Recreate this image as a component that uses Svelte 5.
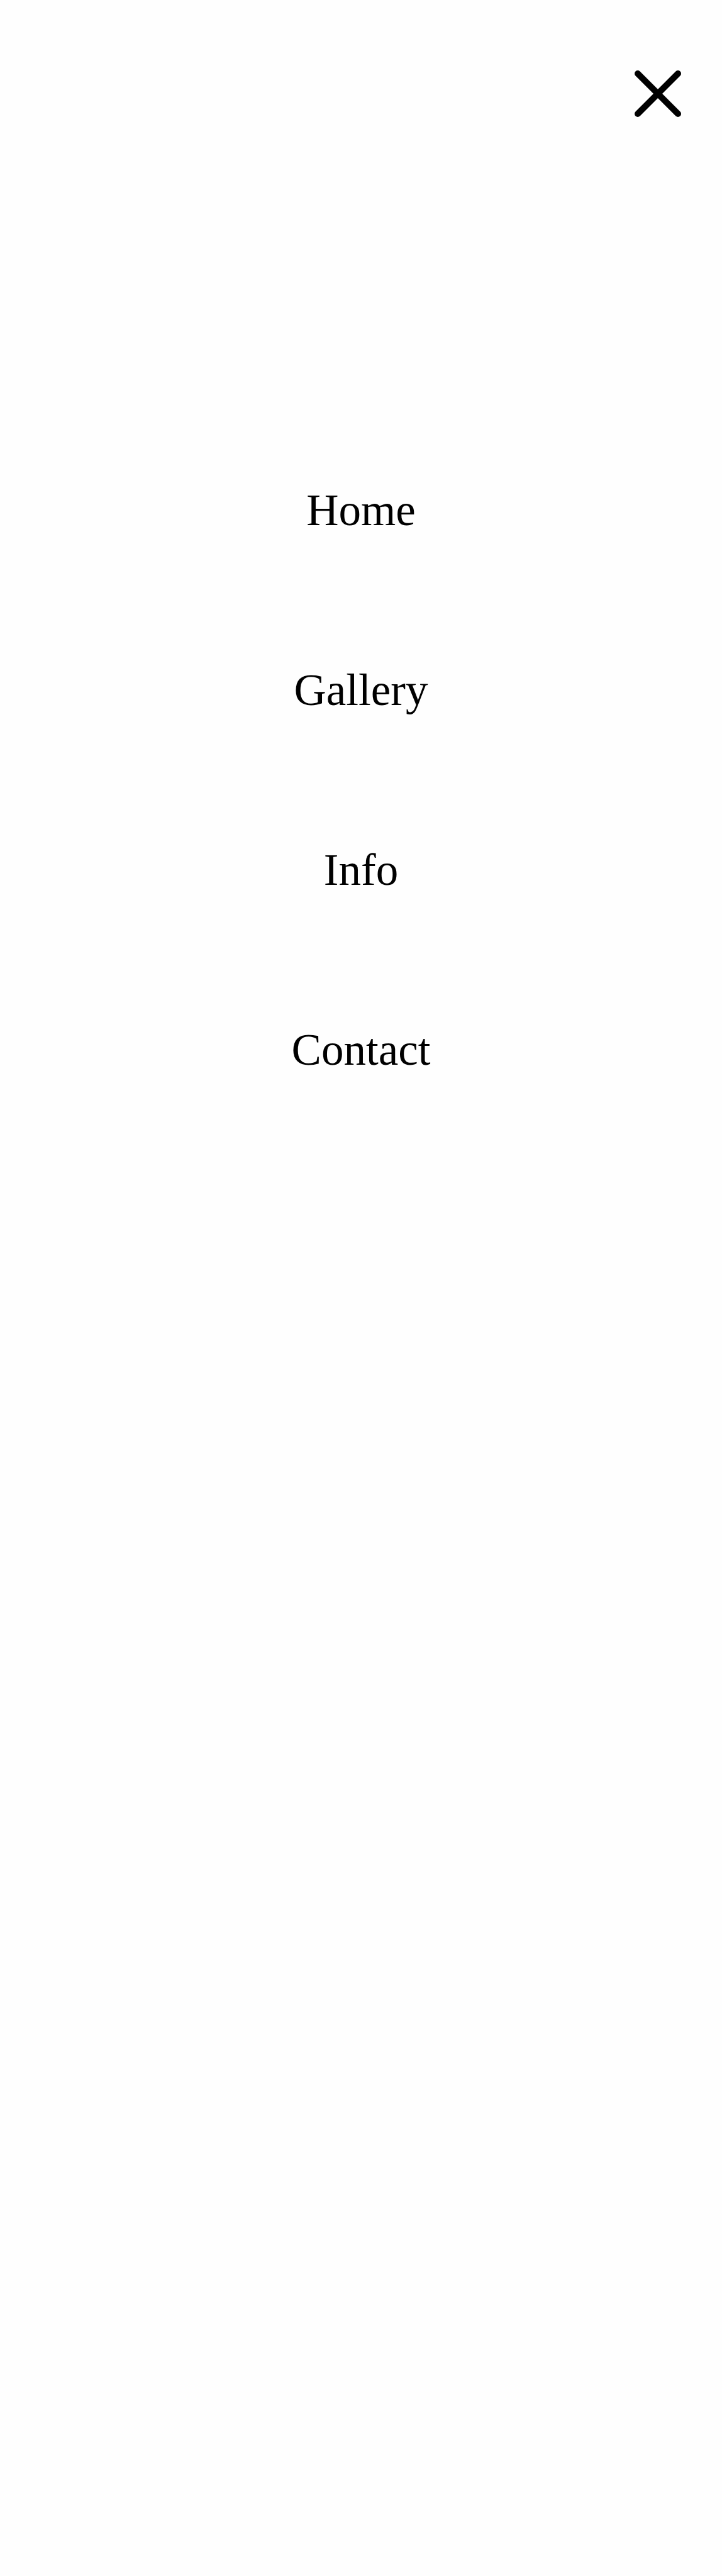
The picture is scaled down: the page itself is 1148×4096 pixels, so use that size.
<script>
  const links = ['Home', 'Gallery', 'Info', 'Contact'];
</script>

<div class="menu">
  <header>
    <button type="button" aria-label="Close menu">
      <svg viewBox="0 0 74 74" aria-hidden="true">
        <path d="M5 5 69 69M69 5 5 69" />
      </svg>
    </button>
  </header>
  <nav aria-label="Main">
    {#each links as link}
      <a href="#{link.toLowerCase()}">{link}</a>
    {/each}
  </nav>
</div>

<style>
  :global(body) {
    background: #fefefe;
  }
  .menu {
    min-height: 100vh;
    font-family: 'Liberation Serif', 'Times New Roman', serif;
    color: #000;
  }
  header {
    display: flex;
    justify-content: flex-end;
    padding: 112px 65px 0;
  }
  button {
    display: flex;
    padding: 0;
    border: 0;
    background: none;
    cursor: pointer;
  }
  svg {
    width: 74px;
    height: 74px;
    fill: none;
    stroke: #000;
    stroke-width: 10;
    stroke-linecap: round;
  }
  nav {
    display: flex;
    flex-direction: column;
    align-items: center;
    gap: 206px;
    padding-top: 585px;
  }
  a {
    font-size: 71px;
    line-height: 80px;
    color: inherit;
    text-decoration: none;
  }
</style>
